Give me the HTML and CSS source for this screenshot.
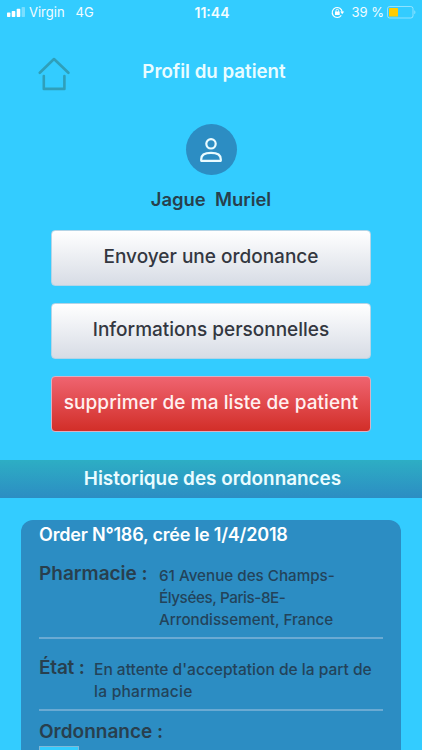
FILE: index.html
```
<!DOCTYPE html>
<html lang="fr">
<head>
    <meta charset="UTF-8">
    <meta name="viewport" content="width=device-width, initial-scale=1">
    <title>Profil du patient</title>
    <link rel="stylesheet" href="styles.css">
</head>
<body>
<div class="status_bar">
    <div class="status_left">
        <svg class="signal" width="18" height="10" viewBox="0 0 18 10" fill="#fff">
            <rect x="0" y="5.5" width="3.4" height="4.5" rx="0.7"/>
            <rect x="4.7" y="4" width="3.6" height="6" rx="0.7"/>
            <rect x="9.7" y="1.8" width="3.6" height="8.2" rx="0.7"/>
            <rect x="14.6" y="0" width="3.4" height="10" rx="0.7" opacity="0.35"/>
        </svg>
        <span class="carrier">Virgin</span>
        <span class="network">4G</span>
    </div>
    <span class="clock">11:44</span>
    <div class="status_right">
        <svg class="lock" width="14" height="13" viewBox="0 0 14 13" fill="none" stroke="#fff">
            <path d="M10.3 9.4A5 5 0 1 1 11.2 6.2" stroke-width="1.1"/>
            <path d="M9.2 5.6h4l-2 2.6z" fill="#fff" stroke="none"/>
            <rect x="4" y="5.6" width="4.7" height="3.5" rx="0.4" fill="#fff" stroke="none"/>
            <path d="M5 6V4.6a1.3 1.3 0 0 1 2.6 0V6" stroke-width="0.9"/>
        </svg>
        <span class="percent">39 %</span>
        <svg class="battery" width="29" height="13" viewBox="0 0 29 13">
            <rect x="0.5" y="0.5" width="25.5" height="11.5" rx="2.2" fill="none" stroke="#fff" stroke-opacity="0.45"/>
            <rect x="2" y="2" width="9" height="8.5" rx="0.5" fill="#fc0"/>
            <path d="M27.4 4.2v4c1.3-.6 1.3-3.4 0-4z" fill="#fff" fill-opacity="0.5"/>
        </svg>
    </div>
</div>

<header class="header">
    <a href="#" class="home">
        <svg width="32" height="34" viewBox="0 0 32 34" fill="none" stroke="#2f9fba" stroke-width="2.6" stroke-linecap="round" stroke-linejoin="round">
            <path d="M1.8 15.8L16 2l14.4 13.8"/>
            <path d="M5.8 19v12.9h20.6V19"/>
        </svg>
    </a>
    <h1 class="title">Profil du patient</h1>
</header>

<section class="profile">
    <div class="avatar">
        <svg width="24" height="26" viewBox="0 0 24 26" fill="none" stroke="#e9fbff" stroke-width="2.2" stroke-linejoin="round">
            <circle cx="12" cy="6.8" r="4.7"/>
            <path d="M2.2 23.8v-1.6c0-4 3.6-6.3 9.8-6.3s9.8 2.3 9.8 6.3v1.6z"/>
        </svg>
    </div>
    <h2 class="name">Jague  Muriel</h2>
</section>

<div class="actions">
    <button class="btn">Envoyer une ordonance</button>
    <button class="btn">Informations personnelles</button>
    <button class="btn btn_danger">supprimer de ma liste de patient</button>
</div>

<h2 class="banner">Historique des ordonnances</h2>

<article class="order">
    <h3 class="order_title">Order N°186, crée le 1/4/2018</h3>
    <div class="row row_pharmacy">
        <span class="label label_pharmacy">Pharmacie :</span>
        <p class="value">61 Avenue des Champs-<br><span class="street">Élysées, Paris-8E-</span><br>Arrondissement, France</p>
    </div>
    <div class="row row_state">
        <span class="label label_state">État :</span>
        <p class="value value_state">En attente d'acceptation de la part de<br><span class="place">la pharmacie</span></p>
    </div>
    <div class="prescription">
        <span class="label">Ordonnance :</span>
        <div class="thumb"></div>
    </div>
</article>
</body>
</html>
```
FILE: styles.css
```
* {
    box-sizing: border-box;
    margin: 0;
    padding: 0;
}
body {
    height: 750px;
    overflow: hidden;
    background: #33ccff;
    color: #2b3e4a;
    font-family: Inter, "Open Sans", sans-serif;
}
svg {
    display: block;
}

/* status bar */
.status_bar {
    display: grid;
    grid-template-columns: 1fr auto 1fr;
    align-items: center;
    height: 24px;
    padding: 0 6px 0 7px;
    color: #f2fcff;
    font-size: 13px;
}
.status_left, .status_right {
    display: flex;
    align-items: center;
}
.status_right {
    justify-content: flex-end;
}
.carrier {
    margin-left: 4px;
}
.network {
    margin-left: 11px;
}
.clock {
    padding-left: 1px;
    font-size: 14px;
    font-weight: 600;
}
.percent {
    margin: 0 3px 0 6px;
}

/* header */
.header {
    display: grid;
    grid-template-columns: 38px 1fr 38px;
    align-items: center;
    height: 96px;
    padding: 0 38px;
}
.home {
    margin-top: 3px;
}
.title {
    padding-left: 6px;
    color: #eafcff;
    font-size: 18.7px;
    font-weight: 600;
    line-height: 24px;
    text-align: center;
}

/* profile */
.profile {
    display: flex;
    flex-direction: column;
    align-items: center;
    padding-top: 4px;
}
.avatar {
    display: flex;
    align-items: center;
    justify-content: center;
    width: 51px;
    height: 51px;
    border-radius: 50%;
    background: #2c8dc3;
}
.name {
    margin-top: 11px;
    color: #27404d;
    font-size: 18.4px;
    font-weight: 600;
    line-height: 26px;
    white-space: pre;
}

/* buttons */
.actions {
    display: flex;
    flex-direction: column;
    gap: 17px;
    padding: 18px 51px 0;
}
.btn {
    height: 56px;
    padding-bottom: 3px;
    border: 1px solid #b4d4e6;
    border-radius: 4px;
    background: linear-gradient(#fff, #d7dce5);
    color: #333740;
    font-family: inherit;
    font-size: 19px;
    font-weight: 500;
    white-space: nowrap;
}
.btn_danger {
    border-color: #d9b0c4;
    background: linear-gradient(#ef6470, #d22e28);
    color: #fff0f0;
    letter-spacing: 0.08px;
}

.banner {
    height: 38px;
    margin-top: 28px;
    padding-left: 3px;
    background: linear-gradient(#2daec4, #2c8dc3);
    color: #eafcff;
    font-size: 18.9px;
    font-weight: 600;
    line-height: 37px;
    text-align: center;
}

/* order card */
.order {
    height: 260px;
    margin: 22px 21px 0;
    padding: 0 18px;
    border-radius: 12px;
    background: #2c8dc3;
}
.order_title {
    color: #fff;
    font-size: 18px;
    font-weight: 600;
    letter-spacing: -0.2px;
    line-height: 29px;
    white-space: nowrap;
}
.row {
    display: flex;
    border-bottom: 2px solid #6aaad3;
}
.row_pharmacy {
    height: 90px;
    padding-top: 12px;
}
.row_state {
    height: 72px;
    padding-top: 16px;
}
.label {
    flex: none;
    color: #283f4e;
    font-size: 19px;
    font-weight: 600;
    line-height: 26px;
    white-space: nowrap;
}
.label_pharmacy {
    width: 120px;
}
.label_state {
    width: 55px;
    letter-spacing: -0.2px;
}
.value {
    padding-top: 4px;
    color: #23435a;
    font-size: 15.2px;
    font-weight: 500;
    line-height: 22px;
    white-space: nowrap;
}
.value_state {
    font-size: 15.55px;
}
.street {
    letter-spacing: -0.4px;
}
.place {
    letter-spacing: 0.25px;
}
.prescription {
    padding-top: 8px;
}
.prescription .label {
    display: block;
}
.thumb {
    width: 40px;
    height: 40px;
    margin-top: 1px;
    border: 1px solid #7fb9d8;
    background: #33ccff;
}
```
